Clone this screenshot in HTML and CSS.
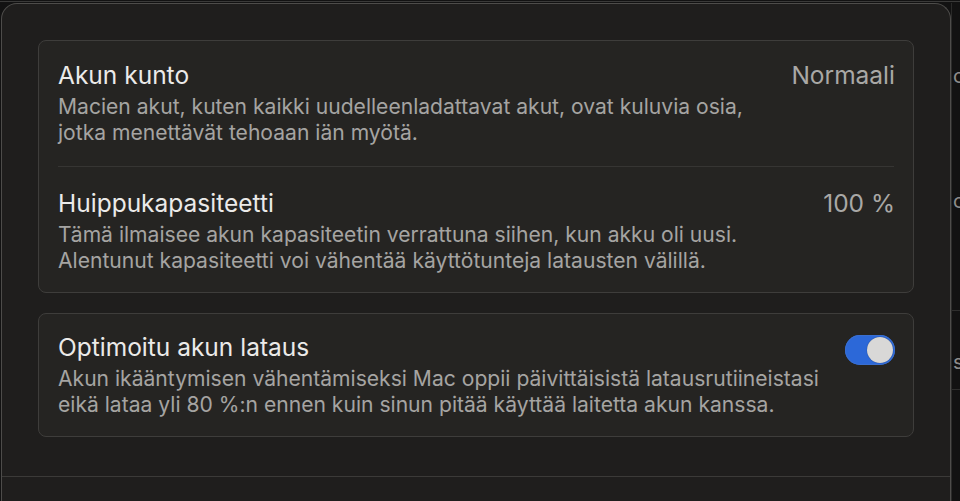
FILE: index.html
```html
<!DOCTYPE html>
<html lang="fi">
<head>
<meta charset="utf-8">
<title>Akku</title>
<link rel="stylesheet" href="styles.css">
</head>
<body>
<div class="screen">
  <div class="window">
    <div class="content">
      <section class="card">
        <div class="row row-first">
          <div class="text">
            <div class="title">Akun kunto</div>
            <div class="desc">Macien akut, kuten kaikki uudelleenladattavat akut, ovat kuluvia osia,<br>jotka menettävät tehoaan iän myötä.</div>
          </div>
          <div class="value">Normaali</div>
        </div>
        <div class="sep"></div>
        <div class="row row-second">
          <div class="text">
            <div class="title">Huippukapasiteetti</div>
            <div class="desc">Tämä ilmaisee akun kapasiteetin verrattuna siihen, kun akku oli uusi.<br>Alentunut kapasiteetti voi vähentää käyttötunteja latausten välillä.</div>
          </div>
          <div class="value">100 %</div>
        </div>
      </section>
      <section class="card card-toggle">
        <div class="row row-toggle">
          <div class="text">
            <div class="title">Optimoitu akun lataus</div>
            <div class="desc">Akun ikääntymisen vähentämiseksi Mac oppii päivittäisistä latausrutiineistasi<br>eikä lataa yli 80 %:n ennen kuin sinun pitää käyttää laitetta akun kanssa.</div>
          </div>
          <div class="toggle" role="switch" aria-checked="true"><span class="knob"></span></div>
        </div>
      </section>
    </div>
    <div class="footer"></div>
  </div>
  <div class="side">
    <span class="side-glyph g1">c</span>
    <span class="side-glyph g2">c</span>
    <span class="side-line l1"></span>
    <span class="side-glyph g3">s</span>
    <span class="side-line l2"></span>
  </div>
</div>
</body>
</html>
```

FILE: styles.css
```css
html, body {
  margin: 0;
  padding: 0;
  background: #121212;
  width: 960px;
  height: 501px;
  overflow: hidden;
  font-family: Inter, "Noto Sans", "Liberation Sans", sans-serif;
}

.screen {
  display: flex;
  height: 501px;
  padding-top: 3px;
  padding-left: 1px;
  box-sizing: border-box;
  background: linear-gradient(#121212 0, #121212 1px, #3a3a39 1px, #3a3a39 2px, #121212 2px);
}

.window {
  width: 950px;
  flex: none;
  background: #1f1e1d;
  border: 1px solid #4d4c4a;
  border-bottom: none;
  border-radius: 16px 16px 0 0;
  display: flex;
  flex-direction: column;
  box-sizing: border-box;
}

.content {
  height: 473px;
  box-sizing: border-box;
  padding: 36px 36px 0 36px;
  border-bottom: 1px solid #3b3a38;
  display: flex;
  flex-direction: column;
  gap: 20px;
}

.footer {
  flex: 1;
}

.card {
  background: #252422;
  border: 1px solid #3e3d3b;
  border-radius: 8px;
  padding: 0 18px 0 19px;
}

.row {
  display: flex;
  justify-content: space-between;
  align-items: flex-start;
}

.row-first {
  padding: 20px 0 20px;
}

.row-second {
  padding: 22px 0 18px;
}

.row-toggle {
  padding: 19px 0 18px;
}

.sep {
  height: 1px;
  background: #363533;
  margin-right: 1px;
}

.title {
  font-size: 24.5px;
  line-height: 28px;
  color: #ebeae9;
}

.desc {
  margin-top: 5px;
  font-size: 21.1px;
  line-height: 26px;
  color: #a5a4a2;
}

.value {
  font-size: 24.5px;
  line-height: 28px;
  color: #a9a8a6;
}

.toggle {
  width: 50px;
  height: 30px;
  border-radius: 15px;
  background: #2c68d8;
  box-shadow: inset 0 0 0 1px #3a6fd0;
  display: flex;
  align-items: center;
  justify-content: flex-end;
  padding: 0 2px;
  box-sizing: border-box;
  margin-top: 2px;
}

.knob {
  width: 26px;
  height: 26px;
  border-radius: 50%;
  background: #d9d8d7;
  box-shadow: 0 0 1px rgba(0,0,0,0.5);
}

.side {
  flex: 1;
  overflow: hidden;
  display: flex;
  flex-direction: column;
  border-left: 1px solid #2a2a29;
  color: #8d8c8a;
  font-size: 20px;
  line-height: 22px;
}

.side-glyph {
  display: block;
  margin-left: 1px;
}

.g1 { margin-top: 62px; }
.g2 { margin-top: 103px; }
.side-line { display: block; height: 1px; background: #2e2e2d; }
.l1 { margin-top: 98px; }
.g3 { margin-top: 40px; }
.l2 { margin-top: 16px; }
```
